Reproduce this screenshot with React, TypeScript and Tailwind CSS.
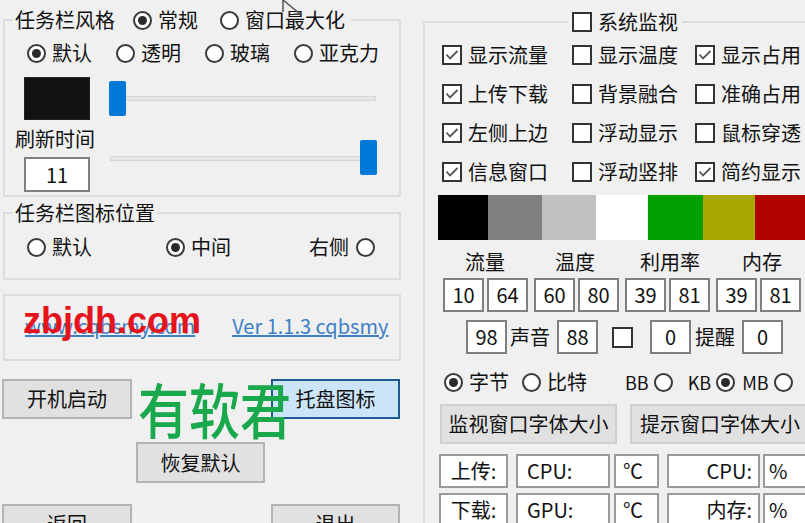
import React from "react";

function Radio({ on = false }: { on?: boolean }) {
  return (
    <span className="flex h-[19px] w-[19px] shrink-0 items-center justify-center rounded-full border-2 border-[#3a3a3a] bg-white">
      {on && <span className="h-[9px] w-[9px] rounded-full bg-[#2a2a2a]" />}
    </span>
  );
}

function Check({ on = false }: { on?: boolean }) {
  return (
    <span className="flex h-[20px] w-[20px] shrink-0 items-center justify-center border-2 border-[#333] bg-white">
      {on && (
        <svg width="14" height="12" viewBox="0 0 14 12" fill="none">
          <path d="M1.5 5.5 L5 9.5 L12.5 2" stroke="#555" strokeWidth="1.8" />
        </svg>
      )}
    </span>
  );
}

function Opt({ on, children }: { on?: boolean; children: React.ReactNode }) {
  return (
    <span className="flex items-center gap-[6px]">
      <Radio on={on} />
      {children}
    </span>
  );
}

function Box({ on, children }: { on?: boolean; children: React.ReactNode }) {
  return (
    <span className="flex items-center gap-[6px]">
      <Check on={on} />
      {children}
    </span>
  );
}

function Num({ v }: { v: string }) {
  return (
    <div className="flex h-[34px] w-[41px] shrink-0 items-center justify-center border-2 border-[#7f7f7f] bg-white">
      {v}
    </div>
  );
}

function Btn({ focus, className, children }: { focus?: boolean; className: string; children: React.ReactNode }) {
  return (
    <div
      className={
        "flex h-[40px] shrink-0 items-center justify-center border-2 " +
        (focus ? "border-[#1f5a8f] bg-[#cce4f7] " : "border-[#b4b4b4] bg-[#e1e1e1] ") +
        className
      }
    >
      {children}
    </div>
  );
}

function Slider({ end }: { end?: boolean }) {
  return (
    <div className="relative flex h-[36px] w-[272px] items-center">
      <div className="mx-[3px] h-[5px] flex-1 border border-[#d6d6d6] bg-[#e7e7e7]" />
      <div
        className={
          "absolute top-0 h-[35px] w-[17px] rounded-[2px] bg-[#0078d7] " + (end ? "right-[2px]" : "left-[2px]")
        }
      />
    </div>
  );
}

function Cell({ className, children }: { className: string; children?: React.ReactNode }) {
  return (
    <div className={"flex h-[34px] shrink-0 items-center border-2 border-[#9a9a9a] bg-white " + className}>
      {children}
    </div>
  );
}

export default function App() {
  return (
    <div className="relative flex h-[523px] w-[805px] overflow-hidden bg-[#f0f0f0] font-['Noto_Sans_CJK_SC',sans-serif] text-[20px] leading-[26px] text-[#111]">
      {/* left column */}
      <div className="relative flex w-[403px] shrink-0 flex-col">
        <fieldset className="ml-[3px] mt-[7px] h-[190px] w-[398px] shrink-0 border-2 border-[#dcdcdc]">
          <legend className="ml-[8px] px-[2px]">
            <span className="flex h-[26px] items-center">
              <span>任务栏风格</span>
              <span className="ml-[18px]">
                <Opt on>常规</Opt>
              </span>
              <span className="ml-[22px] pr-[4px]">
                <Opt>窗口最大化</Opt>
              </span>
            </span>
          </legend>
          <div className="mt-[7px] flex h-[26px] items-center gap-[24px] pl-[22px]">
            <Opt on>默认</Opt>
            <Opt>透明</Opt>
            <Opt>玻璃</Opt>
            <Opt>亚克力</Opt>
          </div>
          <div className="mt-[11px] flex items-center">
            <div className="ml-[19px] h-[43px] w-[66px] border border-[#222] bg-[#111]" />
            <div className="ml-[17px]">
              <Slider />
            </div>
          </div>
          <div className="mt-[6px] flex">
            <div className="w-[102px]">
              <div className="pl-[10px]">刷新时间</div>
              <div className="ml-[19px] mt-[5px] flex h-[35px] w-[66px] items-center justify-center border-2 border-[#7f7f7f] bg-white">
                11
              </div>
            </div>
            <div className="mt-[14px]">
              <Slider end />
            </div>
          </div>
        </fieldset>

        <fieldset className="ml-[3px] mt-[3px] h-[80px] w-[398px] shrink-0 border-2 border-[#dcdcdc]">
          <legend className="ml-[8px] px-[2px]">任务栏图标位置</legend>
          <div className="mt-[8px] flex h-[26px] items-center pl-[22px]">
            <span className="w-[139px]">
              <Opt>默认</Opt>
            </span>
            <span className="w-[143px]">
              <Opt on>中间</Opt>
            </span>
            <span className="flex items-center gap-[7px]">
              右侧
              <Radio />
            </span>
          </div>
        </fieldset>

        <fieldset className="relative ml-[3px] mt-[14px] h-[67px] w-[398px] shrink-0 border-2 border-[#dcdcdc]">
          <div className="mt-[17px] flex h-[26px] items-center pl-[20px] text-[#3d7fc6]">
            <span className="underline">www.cqbsmy.com</span>
            <span className="ml-[37px] underline">Ver 1.1.3 cqbsmy</span>
          </div>
          <div className="absolute left-[18px] top-[7px] font-['Liberation_Sans',sans-serif] text-[36px] font-bold leading-[36px] text-[#e5141c]">
            zbjdh.com
          </div>
        </fieldset>

        <div className="mt-[18px] flex shrink-0">
          <Btn className="ml-[2px] w-[130px]">开机启动</Btn>
          <Btn focus className="ml-[139px] w-[129px]">
            托盘图标
          </Btn>
        </div>
        <div className="mt-[23px] flex shrink-0">
          <Btn className="ml-[136px] w-[129px] h-[41px]">恢复默认</Btn>
        </div>
        <div className="mt-[21px] flex shrink-0">
          <Btn className="ml-[2px] w-[130px]">返回</Btn>
          <Btn className="ml-[139px] w-[129px]">退出</Btn>
        </div>

        <div className="absolute left-[138px] top-[368px] origin-left scale-x-[0.85] text-[60px] font-medium leading-[80px] text-[#19a84c]">
          有软君
        </div>
      </div>

      {/* right column */}
      <fieldset className="ml-[20px] mt-[9px] h-[560px] w-[420px] shrink-0 border-2 border-[#dcdcdc]">
        <legend className="ml-[143px] px-[4px]">
          <Box>系统监视</Box>
        </legend>
        <div className="mt-[7px] grid grid-cols-[130px_123px_auto] gap-y-[13px] pl-[17px]">
          <Box on>显示流量</Box>
          <Box>显示温度</Box>
          <Box on>显示占用</Box>
          <Box on>上传下载</Box>
          <Box>背景融合</Box>
          <Box>准确占用</Box>
          <Box on>左侧上边</Box>
          <Box>浮动显示</Box>
          <Box>鼠标穿透</Box>
          <Box on>信息窗口</Box>
          <Box>浮动竖排</Box>
          <Box on>简约显示</Box>
        </div>
        <div className="mt-[10px] flex h-[45px] pl-[13px]">
          <div className="w-[50px] bg-black" />
          <div className="w-[54px] bg-[#808080]" />
          <div className="w-[54px] bg-[#c0c0c0]" />
          <div className="w-[51px] bg-white" />
          <div className="ml-[1px] w-[55px] bg-[#00a000]" />
          <div className="w-[52px] bg-[#a8a800]" />
          <div className="w-[60px] bg-[#b00000]" />
        </div>
        <div className="mt-[9px] flex h-[26px] items-center">
          <span className="ml-[40px]">流量</span>
          <span className="ml-[50px]">温度</span>
          <span className="ml-[45px]">利用率</span>
          <span className="ml-[42px]">内存</span>
        </div>
        <div className="mt-[3px] flex pl-[18px]">
          <div className="flex gap-[3px]">
            <Num v="10" />
            <Num v="64" />
          </div>
          <div className="ml-[6px] flex gap-[3px]">
            <Num v="60" />
            <Num v="80" />
          </div>
          <div className="ml-[6px] flex gap-[3px]">
            <Num v="39" />
            <Num v="81" />
          </div>
          <div className="ml-[6px] flex gap-[3px]">
            <Num v="39" />
            <Num v="81" />
          </div>
        </div>
        <div className="mt-[8px] flex items-center pl-[41px]">
          <Num v="98" />
          <span className="ml-[3px]">声音</span>
          <span className="ml-[7px]">
            <Num v="88" />
          </span>
          <span className="ml-[14px]">
            <span className="block h-[21px] w-[21px] border-2 border-[#333] bg-white" />
          </span>
          <span className="ml-[17px]">
            <Num v="0" />
          </span>
          <span className="ml-[4px]">提醒</span>
          <span className="ml-[7px]">
            <Num v="0" />
          </span>
        </div>
        <div className="mt-[15px] flex h-[26px] items-center pl-[19px]">
          <Opt on>字节</Opt>
          <span className="ml-[13px]">
            <Opt>比特</Opt>
          </span>
          <span className="ml-[38px] flex items-center gap-[5px] text-[18px]">
            BB
            <Radio />
          </span>
          <span className="ml-[15px] flex items-center gap-[5px] text-[18px]">
            KB
            <Radio on />
          </span>
          <span className="ml-[7px] flex items-center gap-[5px] text-[18px]">
            MB
            <Radio />
          </span>
        </div>
        <div className="mt-[9px] flex pl-[15px]">
          <Btn className="w-[177px] border-[#d0d0d0]">监视窗口字体大小</Btn>
          <Btn className="ml-[13px] w-[180px] border-[#d0d0d0]">提示窗口字体大小</Btn>
        </div>
        <div className="mt-[10px] flex pl-[14px]">
          <Cell className="w-[69px] justify-center">上传:</Cell>
          <Cell className="ml-[8px] w-[94px] pl-[9px]">CPU:</Cell>
          <Cell className="ml-[4px] w-[45px] pl-[7px]">℃</Cell>
          <Cell className="ml-[8px] w-[93px] justify-end pr-[6px]">CPU:</Cell>
          <Cell className="ml-[3px] w-[50px] pl-[4px]">%</Cell>
        </div>
        <div className="mt-[5px] flex pl-[14px]">
          <Cell className="w-[69px] justify-center">下载:</Cell>
          <Cell className="ml-[8px] w-[94px] pl-[9px]">GPU:</Cell>
          <Cell className="ml-[4px] w-[45px] pl-[7px]">℃</Cell>
          <Cell className="ml-[8px] w-[93px] justify-end pr-[6px]">内存:</Cell>
          <Cell className="ml-[3px] w-[50px] pl-[4px]">%</Cell>
        </div>
      </fieldset>

      {/* mouse pointer tail at top */}
      <svg className="absolute left-[280px] top-0" width="24" height="16" viewBox="0 0 24 16">
        <path d="M3 0 L3 12 M3 0 L20 14 L14 14" fill="none" stroke="#555" strokeWidth="1.5" />
      </svg>
    </div>
  );
}
